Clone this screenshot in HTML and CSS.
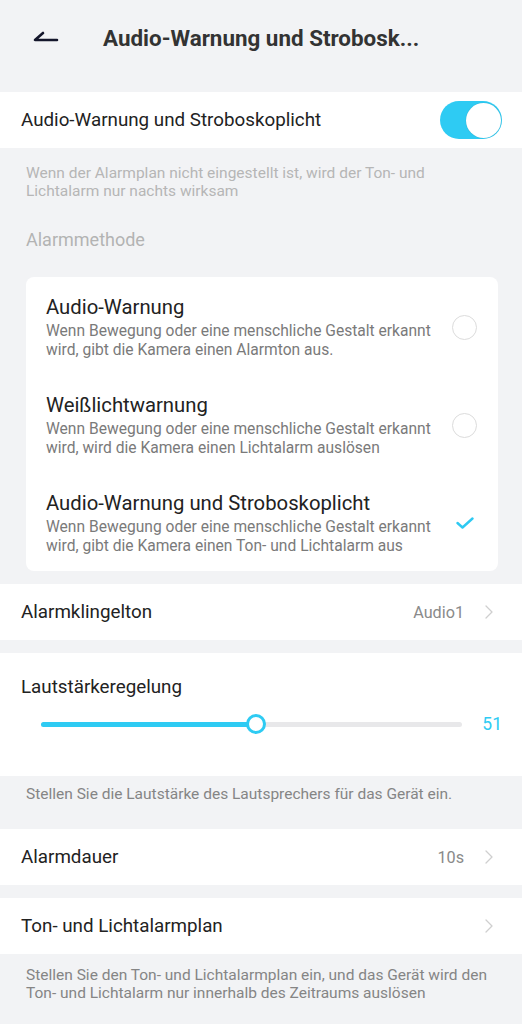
FILE: index.html
```html
<!DOCTYPE html>
<html lang="de">
<head>
<meta charset="utf-8">
<link rel="stylesheet" href="styles.css">
</head>
<body>
<div class="page">
  <header class="topbar">
    <span class="back">
      <svg width="26" height="14" viewBox="0 0 26 14"><path d="M10 3 L2 10 H24" fill="none" stroke="#14162b" stroke-width="2.6" stroke-linecap="round" stroke-linejoin="round"/></svg>
    </span>
    <h1 class="title">Audio-Warnung und Strobosk...</h1>
  </header>

  <div class="row">
    <span class="row-label">Audio-Warnung und Stroboskoplicht</span>
    <span class="toggle"><span class="knob"></span></span>
  </div>

  <p class="hint hint-light first">Wenn der Alarmplan nicht eingestellt ist, wird der Ton- und Lichtalarm nur nachts wirksam</p>
  <p class="section-label">Alarmmethode</p>

  <div class="card">
    <div class="option">
      <div class="option-text">
        <div class="option-title">Audio-Warnung</div>
        <div class="option-desc">Wenn Bewegung oder eine menschliche Gestalt erkannt wird, gibt die Kamera einen Alarmton aus.</div>
      </div>
      <span class="radio"></span>
    </div>
    <div class="option">
      <div class="option-text">
        <div class="option-title">Weißlichtwarnung</div>
        <div class="option-desc">Wenn Bewegung oder eine menschliche Gestalt erkannt wird, wird die Kamera einen Lichtalarm auslösen</div>
      </div>
      <span class="radio"></span>
    </div>
    <div class="option">
      <div class="option-text">
        <div class="option-title">Audio-Warnung und Stroboskoplicht</div>
        <div class="option-desc">Wenn Bewegung oder eine menschliche Gestalt erkannt wird, gibt die Kamera einen Ton- und Lichtalarm aus</div>
      </div>
      <span class="check">
        <svg width="18" height="12" viewBox="0 0 18 12"><path d="M1.5 6 L6.5 10.5 L16.5 1.5" fill="none" stroke="#2ec9f2" stroke-width="2.4" stroke-linecap="round" stroke-linejoin="round"/></svg>
      </span>
    </div>
  </div>

  <div class="row row-gap">
    <span class="row-label">Alarmklingelton</span>
    <span class="row-value">Audio1</span>
    <span class="chev"><svg width="8" height="14" viewBox="0 0 8 14"><path d="M1 1 L7 7 L1 13" fill="none" stroke="#cfcfcf" stroke-width="1.3" stroke-linecap="round" stroke-linejoin="round"/></svg></span>
  </div>

  <div class="volume">
    <div class="row-label">Lautstärkeregelung</div>
    <div class="slider-line">
      <div class="track">
        <div class="fill" style="width:51%"><span class="thumb"></span></div>
      </div>
      <span class="vol-value">51</span>
    </div>
  </div>
  <p class="hint hint-dark">Stellen Sie die Lautstärke des Lautsprechers für das Gerät ein.</p>

  <div class="row">
    <span class="row-label">Alarmdauer</span>
    <span class="row-value">10s</span>
    <span class="chev"><svg width="8" height="14" viewBox="0 0 8 14"><path d="M1 1 L7 7 L1 13" fill="none" stroke="#cfcfcf" stroke-width="1.3" stroke-linecap="round" stroke-linejoin="round"/></svg></span>
  </div>

  <div class="row row-gap">
    <span class="row-label">Ton- und Lichtalarmplan</span>
    <span class="chev"><svg width="8" height="14" viewBox="0 0 8 14"><path d="M1 1 L7 7 L1 13" fill="none" stroke="#cfcfcf" stroke-width="1.3" stroke-linecap="round" stroke-linejoin="round"/></svg></span>
  </div>
  <p class="hint hint-dark last">Stellen Sie den Ton- und Lichtalarmplan ein, und das Gerät wird den Ton- und Lichtalarm nur innerhalb des Zeitraums auslösen</p>
</div>
</body>
</html>
```

FILE: styles.css
```css
* { box-sizing: border-box; }
html, body {
  margin: 0;
  padding: 0;
  background: #f2f3f5;
  font-family: Roboto, "Noto Sans", "Liberation Sans", sans-serif;
  color: #222;
}
.page {
  width: 522px;
  min-height: 1024px;
  background: #f2f3f5;
}
.topbar {
  height: 76px;
  display: flex;
  align-items: center;
  margin-bottom: 16px;
}
.back {
  width: 103px;
  padding-left: 33px;
  display: flex;
  align-items: center;
  margin-top: -3px;
}
.back svg { display: block; }
.title {
  margin: 0;
  font-size: 22.4px;
  font-weight: 700;
  color: #333;
}
.row {
  height: 56px;
  background: #fff;
  display: flex;
  align-items: center;
  padding: 0 20px 0 21px;
}
.row-label {
  font-size: 18.8px;
  color: #222;
  flex: 1;
  font-weight: 400;
}
.row-value {
  font-size: 16.2px;
  color: #8a8a8a;
  margin-right: 21px;
}
.chev {
  display: flex;
  align-items: center;
  margin-right: 9px;
}
.row-gap { margin-top: 13px; }
.toggle {
  width: 62px;
  height: 38px;
  border-radius: 19px;
  background: #2ecbf3;
  display: flex;
  align-items: center;
  justify-content: flex-end;
  padding-right: 1px;
}
.knob {
  width: 35px;
  height: 35px;
  border-radius: 50%;
  background: #fff;
  box-shadow: 0 0 1px rgba(0,0,0,0.25);
}
.hint {
  margin: 0;
  padding: 0 26px;
  font-size: 15.5px;
  line-height: 18px;
}
.hint-light { color: #b6b6b6; }
.hint-dark { color: #858585; padding-top: 9px; padding-bottom: 26px; }
.hint.first { padding-top: 16px; }
.hint.last { padding-top: 12px; }
.section-label {
  margin: 30px 0 0;
  padding: 0 26px;
  font-size: 18px;
  line-height: 20px;
  color: #b3b3b3;
}
.card {
  margin: 27px 24px 0 26px;
  background: #fff;
  border-radius: 8px;
}
.option {
  display: flex;
  align-items: center;
  padding: 17.5px 21px 15px 20px;
}
.option-text { flex: 1; }
.option-title {
  font-size: 20.3px;
  line-height: 24px;
  color: #222;
}
.option-desc {
  margin-top: 3.5px;
  font-size: 15.6px;
  line-height: 19px;
  color: #7a7a7a;
  padding-right: 8px;
}
.radio {
  width: 25px;
  height: 25px;
  border-radius: 50%;
  border: 1.5px solid #dcdcdc;
  flex: none;
}
.check {
  width: 25px;
  display: flex;
  justify-content: center;
  flex: none;
}
.check svg { display: block; }
.volume {
  margin-top: 13px;
  background: #fff;
  padding: 23px 20px 0 21px;
  height: 123px;
}
.volume .row-label { line-height: 22px; }
.slider-line {
  display: flex;
  align-items: center;
  margin-top: 16px;
  padding-left: 20px;
}
.track {
  flex: 1;
  height: 5px;
  border-radius: 3px;
  background: #e8e8ea;
  position: relative;
}
.fill {
  height: 5px;
  border-radius: 3px;
  background: #2ecbf3;
  position: relative;
}
.thumb {
  position: absolute;
  right: -10px;
  top: -7.5px;
  width: 20px;
  height: 20px;
  border-radius: 50%;
  background: #fff;
  border: 3.5px solid #2ecbf3;
}
.vol-value {
  width: 40px;
  text-align: right;
  font-size: 17.5px;
  color: #2ecbf3;
}
```
